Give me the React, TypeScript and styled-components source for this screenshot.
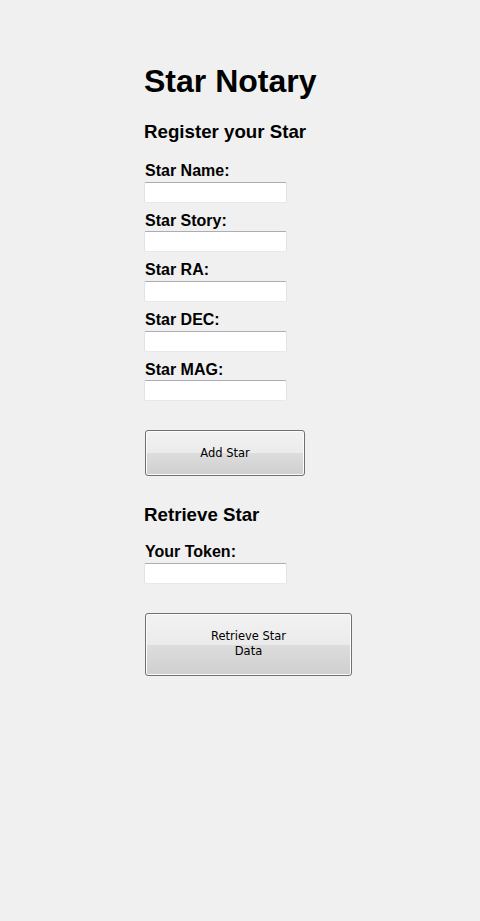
import React from "react";
import styled, { createGlobalStyle } from "styled-components";

const Global = createGlobalStyle`
  html, body {
    margin: 0;
    padding: 0;
    background: #f0f0f0;
  }
  body {
    font-family: "Liberation Sans", Arial, sans-serif;
    color: #000;
  }
`;

const Page = styled.main`
  width: 192px;
  margin: 0 auto;
  padding-top: 63px;
  padding-bottom: 40px;
`;

const Title = styled.h1`
  font-size: 32px;
  font-weight: bold;
  margin: 0 0 21.44px;
`;

const Heading = styled.h3<{ $below?: number }>`
  font-size: 18.72px;
  font-weight: bold;
  margin: 18.72px 0 ${(p) => p.$below ?? 18.72}px;
`;

const FieldLabel = styled.label`
  display: block;
  font-size: 16px;
  font-weight: bold;
  margin-left: 1px;
`;

const TextInput = styled.input`
  display: block;
  box-sizing: border-box;
  width: 143px;
  height: 21px;
  margin: 1.6px 0 9px;
  padding: 1px 2px;
  background: #fff;
  border: 1px solid;
  border-color: #abadb3 #e2e3ea #e3e9ef #e2e3ea;
  border-radius: 2px;
  font-family: "Liberation Sans", Arial, sans-serif;
  font-size: 13.33px;
  outline: none;
`;

const ActionButton = styled.button<{ $w: number; $h: number; $px: number }>`
  display: block;
  box-sizing: border-box;
  width: ${(p) => p.$w}px;
  height: ${(p) => p.$h}px;
  margin: 29px 0 28px 1px;
  padding: 0 ${(p) => p.$px}px;
  border: 1px solid #707070;
  border-radius: 3px;
  box-shadow: inset 0 0 0 1px #fcfcfc;
  background: linear-gradient(
    to bottom,
    #f2f2f2 0%,
    #ebebeb 50%,
    #dddddd 50%,
    #cfcfcf 100%
  );
  font-family: "DejaVu Sans", Tahoma, sans-serif;
  font-size: 11.5px;
  line-height: 15px;
  color: #000;
  text-align: center;
`;

export default function App() {
  const fields = ["Star Name:", "Star Story:", "Star RA:", "Star DEC:", "Star MAG:"];
  return (
    <>
      <Global />
      <Page>
        <Title>Star Notary</Title>
        <Heading>Register your Star</Heading>
        {fields.map((f) => (
          <div key={f}>
            <FieldLabel>{f}</FieldLabel>
            <TextInput type="text" />
          </div>
        ))}
        <ActionButton $w={160} $h={46} $px={20}>
          Add Star
        </ActionButton>
        <Heading $below={17}>Retrieve Star</Heading>
        <FieldLabel>Your Token:</FieldLabel>
        <TextInput type="text" />
        <ActionButton $w={207} $h={63} $px={60}>
          Retrieve Star Data
        </ActionButton>
      </Page>
    </>
  );
}
